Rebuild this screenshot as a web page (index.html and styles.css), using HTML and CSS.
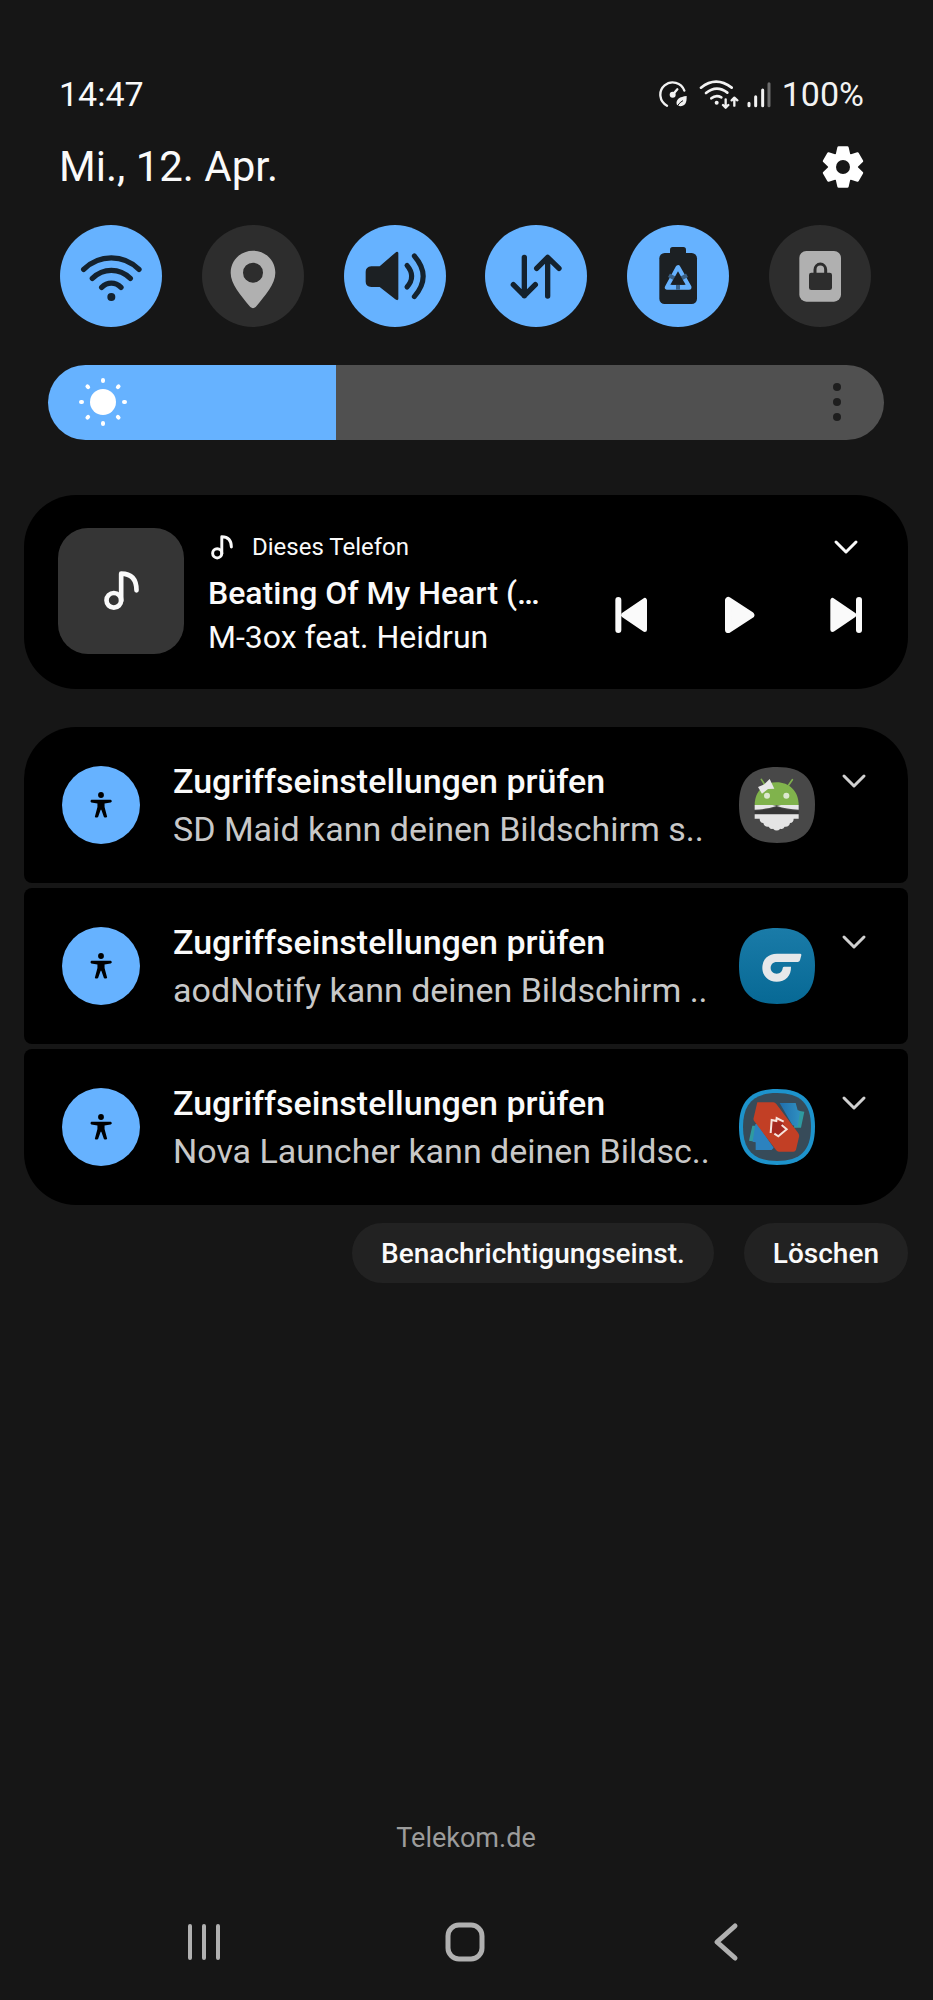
FILE: index.html
```
<!DOCTYPE html>
<html lang="de">
<head>
<meta charset="UTF-8">
<meta name="viewport" content="width=device-width, initial-scale=1.0">
<title>Benachrichtigungen</title>
<link rel="stylesheet" href="styles.css">
</head>
<body>

<!-- Shared icons -->
<svg class="sprite" aria-hidden="true">
    <symbol id="chevron" viewBox="0 0 40 40">
        <path d="M10 15 L20 25 L30 15" fill="none" stroke="currentColor" stroke-width="3" stroke-linecap="round" stroke-linejoin="round"/>
    </symbol>
    <symbol id="note" viewBox="0 0 104 120">
        <circle cx="29" cy="88" r="22" fill="none" stroke="currentColor" stroke-width="14"/>
        <path d="M51 90 V8 C80 8 97 24 97 58" fill="none" stroke="currentColor" stroke-width="14" stroke-linecap="round" stroke-linejoin="round"/>
    </symbol>
    <symbol id="person" viewBox="0 0 68 80">
        <circle cx="34" cy="9" r="9"/>
        <path d="M4 24 H64 Q68 26 67 30 L64 32 L45 35 V46 L53 76 Q48 81 43 77 L35 55 H33 L25 77 Q18 81 15 76 L23 46 V35 L4 32 Q-1 28 4 24Z"/>
    </symbol>
</svg>

<header class="status-bar">
    <time>14:47</time>
    <div class="status-icons">
        <svg class="gauge" viewBox="55 30 90 84">
            <path d="M82 107 A37 37 0 1 1 134 62" fill="none" stroke="#f2f2f2" stroke-width="7" stroke-linecap="round"/>
            <circle cx="99" cy="74" r="9" fill="#f2f2f2"/>
            <path d="M99 74 L113 58" stroke="#f2f2f2" stroke-width="7" stroke-linecap="round"/>
            <path d="M141 78 C120 80 108 88 111 103 C114 110 131 111 137 101 C141 94 141 88 141 78Z" fill="#f2f2f2"/>
            <path d="M112 113 C114 104 121 97 130 92" fill="none" stroke="#161616" stroke-width="3"/>
        </svg>
        <svg class="wifi" viewBox="175 24 120 90">
            <g fill="none" stroke="#f2f2f2" stroke-width="8" stroke-linecap="round" stroke-linejoin="round">
                <path d="M181 50 Q226 14 273 50"/>
                <path d="M196 66 Q228 40 260 65"/>
                <path d="M212 82 Q226 70 242 79"/>
                <path d="M255 85 V109 M247 102 L255 110 L263 102 M281 104 V81 M273 88 L281 80 L290 88" stroke-width="7"/>
            </g>
            <circle cx="228" cy="95" r="6" fill="#f2f2f2"/>
        </svg>
        <svg class="signal" viewBox="318 30 72 81">
            <g fill="none" stroke="#f2f2f2" stroke-width="9" stroke-linecap="round">
                <path d="M324 97 V104 M344 77 V104 M365 57 V104"/>
                <path d="M384 38 V104" stroke="#6c6c6c"/>
            </g>
        </svg>
        <span>100%</span>
    </div>
</header>

<div class="date-row">
    <h1>Mi., 12. Apr.</h1>
    <button class="settings" aria-label="Einstellungen">
        <svg viewBox="-66 -66 132 132">
            <g fill="#fff" stroke="#fff" stroke-width="8" stroke-linejoin="round">
                <circle r="40"/>
                <path id="teeth" d="M-13 -58 H13 L19 -32 H-19Z M-13 58 H13 L19 32 H-19Z"/>
                <use href="#teeth" transform="rotate(60)"/>
                <use href="#teeth" transform="rotate(120)"/>
            </g>
            <circle r="21" fill="#161616"/>
        </svg>
    </button>
</div>

<div class="tiles">
    <button class="tile on" aria-label="WLAN">
        <svg viewBox="0 0 306 306">
            <g fill="none" stroke="#14222e" stroke-width="16" stroke-linecap="round">
                <path d="M71 133 C118 87 190 87 237 133"/>
                <path d="M97 160 C130 128 178 128 211 160"/>
                <path d="M125 187 C142 170 166 170 183 187"/>
            </g>
            <circle cx="154" cy="216" r="12" fill="#14222e"/>
        </svg>
    </button>
    <button class="tile" aria-label="Standort">
        <svg viewBox="0 0 306 306">
            <path fill="#b0b0b0" fill-rule="evenodd" d="M153 77 C190 77 220 106 220 143 C220 178 190 210 161 246 Q153 253 145 246 C116 210 86 178 86 143 C86 106 116 77 153 77Z M153 113 A30 30 0 1 0 153 173 A30 30 0 1 0 153 113Z"/>
        </svg>
    </button>
    <button class="tile on" aria-label="Ton">
        <svg viewBox="0 0 306 306">
            <path fill="#1c2023" d="M82 124 H107 L154 83 Q160 78 163 83 V223 Q160 228 154 223 L107 186 H82 Q65 184 65 170 V140 Q65 126 82 124Z"/>
            <g fill="none" stroke="#14222e" stroke-width="15" stroke-linecap="round">
                <path d="M189 121 Q217 154 189 186"/>
                <path d="M211 93 Q264 154 211 215"/>
            </g>
        </svg>
    </button>
    <button class="tile on" aria-label="Mobile Daten">
        <svg viewBox="0 0 306 306">
            <path fill="none" stroke="#14222e" stroke-width="16" stroke-linecap="round" stroke-linejoin="round" d="M118 97 V212 M85 179 L118 212 L151 179 M188 213 V98 M155 130 L188 97 L222 130"/>
        </svg>
    </button>
    <button class="tile on" aria-label="Energiesparen">
        <svg viewBox="0 0 306 306">
            <rect x="129" y="66" width="48" height="40" rx="8" fill="#1c2023"/>
            <rect x="97" y="84" width="113" height="153" rx="16" fill="#1c2023"/>
            <path d="M153 128 L121 187 H186Z" fill="#1c2023" stroke="#66b2ff" stroke-width="15" stroke-linejoin="round"/>
            <path d="M126 151 L142 160 M180 151 L164 160 M153 180 V194" stroke="#3b6288" stroke-width="12"/>
            <path d="M153 139 L176 179 H130Z" fill="#1c2023"/>
        </svg>
    </button>
    <button class="tile" aria-label="Hochformat">
        <svg viewBox="0 0 306 306">
            <rect x="91" y="78" width="125" height="152" rx="21" fill="#b0b0b0"/>
            <rect x="120" y="143" width="69" height="52" rx="7" fill="#2d2d2d"/>
            <path d="M138 146 V134 A16 17 0 0 1 170 134 V146" fill="none" stroke="#2d2d2d" stroke-width="9"/>
        </svg>
    </button>
</div>

<div class="brightness">
    <input type="range" min="0" max="200" value="69" aria-label="Helligkeit" style="--level: 34.5%">
    <svg class="sun" viewBox="-24 -24 48 48">
        <circle r="13" fill="#fff"/>
        <g stroke="#fff" stroke-width="4" stroke-linecap="round">
            <path id="rays" d="M0 -22 V-21 M0 22 V21 M-22 0 H-21 M22 0 H21"/>
            <use href="#rays" transform="rotate(45)"/>
        </g>
    </svg>
    <button class="more" aria-label="Mehr">
        <svg viewBox="0 0 40 40">
            <g fill="#1e1e1e">
                <circle cx="20" cy="5" r="4"/>
                <circle cx="20" cy="20" r="4"/>
                <circle cx="20" cy="35" r="4"/>
            </g>
        </svg>
    </button>
</div>

<section class="media">
    <div class="cover"><svg><use href="#note"/></svg></div>
    <div class="media-body">
        <div class="media-top">
            <svg class="small-note"><use href="#note"/></svg>
            <span>Dieses Telefon</span>
            <button class="icon-button" aria-label="Erweitern"><svg><use href="#chevron"/></svg></button>
        </div>
        <div class="media-bottom">
            <div class="track">
                <h2>Beating Of My Heart (…</h2>
                <p>M-3ox feat. Heidrun</p>
            </div>
            <div class="controls">
                <button class="icon-button" aria-label="Zurück">
                    <svg viewBox="0 0 120 120">
                        <g fill="#fafafa" stroke="#fafafa" stroke-linejoin="round" stroke-linecap="round">
                            <path d="M98 16 V104 L34 60Z" stroke-width="14"/>
                            <path d="M19 15 V105" stroke-width="18"/>
                        </g>
                    </svg>
                </button>
                <button class="icon-button" aria-label="Wiedergabe">
                    <svg viewBox="0 0 120 120">
                        <path d="M28 16 V104 L96 60Z" fill="#fafafa" stroke="#fafafa" stroke-width="20" stroke-linejoin="round"/>
                    </svg>
                </button>
                <button class="icon-button" aria-label="Weiter">
                    <svg viewBox="0 0 120 120">
                        <g fill="#fafafa" stroke="#fafafa" stroke-linejoin="round" stroke-linecap="round">
                            <path d="M20 16 V104 L84 60Z" stroke-width="14"/>
                            <path d="M99 15 V105" stroke-width="18"/>
                        </g>
                    </svg>
                </button>
            </div>
        </div>
    </div>
</section>

<section class="notifications">
    <article class="notification">
        <div class="badge"><svg><use href="#person"/></svg></div>
        <div class="message">
            <h2>Zugriffseinstellungen prüfen</h2>
            <p>SD Maid kann deinen Bildschirm s..</p>
        </div>
        <svg class="app-icon" viewBox="0 0 228 228">
            <path fill="#484848" d="M114 0 C192 0 228 36 228 114 S192 228 114 228 S0 192 0 114 S36 0 114 0Z"/>
            <path d="M67 37 L78 54 M160 38 L149 54" stroke="#7fae4e" stroke-width="5" stroke-linecap="round"/>
            <path fill="#80b34c" d="M47 115 C47 72 76 46 113 46 S179 72 179 115Z"/>
            <path fill="#e8e8e8" d="M47 114 H100 L113 117 L126 114 H179 V128 C155 127 134 124 113 117 C92 124 71 127 47 128Z"/>
            <path fill="#363636" d="M47 131 C76 130 94 126 113 120 C132 126 150 130 179 131 V142 H47Z"/>
            <path fill="#e4e4e4" d="M47 142 H179 V155 H164 Q164 167 153 168 Q150 181 137 179 Q132 188 124 185 Q113 196 102 185 Q94 188 89 179 Q76 181 73 168 Q62 167 62 155 H47Z"/>
            <circle cx="84" cy="86" r="9" fill="#dce8cf"/>
            <circle cx="142" cy="86" r="9" fill="#dce8cf"/>
            <path fill="#e8e8e8" d="M57 60 L76 52 L92 36 L106 65 L87 66 L69 80Z"/>
        </svg>
        <button class="icon-button" aria-label="Erweitern"><svg><use href="#chevron"/></svg></button>
    </article>

    <article class="notification">
        <div class="badge"><svg><use href="#person"/></svg></div>
        <div class="message">
            <h2>Zugriffseinstellungen prüfen</h2>
            <p>aodNotify kann deinen Bildschirm ..</p>
        </div>
        <svg class="app-icon" viewBox="0 0 228 228">
            <linearGradient id="aod" x2="0" y2="1">
                <stop offset="0" stop-color="#1a7ba8"/>
                <stop offset="1" stop-color="#076995"/>
            </linearGradient>
            <path fill="url(#aod)" d="M114 0 C192 0 228 36 228 114 S192 228 114 228 S0 192 0 114 S36 0 114 0Z"/>
            <path fill="#e6e8ea" d="M184 77 Q188 77 187 82 L183 97 Q181 102 176 102 H114 C101 102 95 110 95 120 C95 130 103 137 113 137 C124 137 130 130 131 121 Q131 116 135 116 H156 C157 143 139 161 113 161 C88 161 70 144 70 120 C70 93 88 77 114 77Z"/>
        </svg>
        <button class="icon-button" aria-label="Erweitern"><svg><use href="#chevron"/></svg></button>
    </article>

    <article class="notification">
        <div class="badge"><svg><use href="#person"/></svg></div>
        <div class="message">
            <h2>Zugriffseinstellungen prüfen</h2>
            <p>Nova Launcher kann deinen Bildsc..</p>
        </div>
        <svg class="app-icon" viewBox="0 0 228 228">
            <linearGradient id="nova-right">
                <stop offset="0" stop-color="#1f6fae"/>
                <stop offset="1" stop-color="#2f8fc0"/>
            </linearGradient>
            <path fill="#1d93cc" d="M114 0 C192 0 228 36 228 114 S192 228 114 228 S0 192 0 114 S36 0 114 0Z"/>
            <path fill="#374b59" d="M114 12 C184 12 216 44 216 114 S184 216 114 216 S12 184 12 114 S44 12 114 12Z"/>
            <path fill="#2e9aa0" d="M170 64 L196 68 L186 116 H165Z M40 110 L58 110 V160 L30 155Z"/>
            <path fill="url(#nova-right)" d="M122 42 H170 L176 64 L183 66 L176 114 L160 108Z"/>
            <path fill="#2c82bf" d="M54 104 L104 176 L98 183 H50 V160 L41 158 L49 106Z"/>
            <path fill="#c23f25" d="M55 40 H103 Q108 40 112 45 L177 131 Q182 138 180 144 L171 182 Q169 188 163 188 H120 Q115 188 111 183 L46 97 Q42 92 44 86Z"/>
            <path fill="#a5281f" d="M98 96 L130 98 L142 120 L118 142 L97 130Z"/>
            <path fill="none" stroke="#f6e3dc" stroke-width="6" d="M95 132 L98 93 L112 96 L113 87 L134 98 M128 108 L143 121 L118 142 L106 134"/>
        </svg>
        <button class="icon-button" aria-label="Erweitern"><svg><use href="#chevron"/></svg></button>
    </article>
</section>

<div class="actions">
    <button>Benachrichtigungseinst.</button>
    <button>Löschen</button>
</div>

<footer>
    <p class="carrier">Telekom.de</p>
    <nav class="nav-bar">
        <button aria-label="Letzte Apps">
            <svg viewBox="0 0 40 40"><path d="M6 4 V36 M20 4 V36 M34 4 V36" fill="none" stroke="#b0b0b0" stroke-width="4" stroke-linecap="round"/></svg>
        </button>
        <button aria-label="Startseite">
            <svg viewBox="0 0 40 40"><rect x="3" y="3" width="34" height="34" rx="11" fill="none" stroke="#b0b0b0" stroke-width="5"/></svg>
        </button>
        <button aria-label="Zurück">
            <svg viewBox="0 0 40 40"><path d="M29 4 L11 20 L29 36" fill="none" stroke="#b0b0b0" stroke-width="5" stroke-linecap="round" stroke-linejoin="round"/></svg>
        </button>
    </nav>
</footer>

</body>
</html>
```
FILE: styles.css
```
* {
    box-sizing: border-box;
}
body {
    margin: 0;
    min-height: 100vh;
    padding: 74px 25px 0 24px;
    display: flex;
    flex-direction: column;
    background-color: #161616;
    color: #fafafa;
    font-family: Roboto, "Liberation Sans", sans-serif;
}
h1, h2, p {
    margin: 0;
    white-space: nowrap;
}
svg {
    display: block;
}
button {
    border: 0;
    padding: 0;
    background: none;
    color: inherit;
    font-family: inherit;
}
.sprite {
    position: absolute;
    width: 0;
    height: 0;
}

/* Status bar and date */
.status-bar {
    display: flex;
    justify-content: space-between;
    padding: 0 44px 0 35px;
    font-size: 34px;
    line-height: 40px;
}
.status-icons {
    display: flex;
    align-items: center;
    color: #f2f2f2;
}
.gauge {
    width: 30px;
    height: 28px;
    margin-right: 11px;
}
.wifi {
    width: 40px;
    height: 30px;
    margin-right: 8px;
}
.signal {
    width: 24px;
    height: 27px;
    margin-right: 11px;
}
.date-row {
    display: flex;
    justify-content: space-between;
    align-items: center;
    margin-top: 28px;
    padding: 0 43px 0 35px;
}
h1 {
    font-size: 42px;
    font-weight: 400;
    line-height: 50px;
}
.settings svg {
    width: 44px;
    height: 44px;
}

/* Quick settings */
.tiles {
    display: flex;
    justify-content: space-between;
    margin-top: 33px;
    padding: 0 37px 0 36px;
}
.tile {
    width: 102px;
    height: 102px;
    border-radius: 50%;
    background-color: #2d2d2d;
}
.tile.on {
    background-color: #66b2ff;
}
.brightness {
    position: relative;
    margin: 38px 24px 0;
    height: 75px;
}
.brightness input {
    appearance: none;
    display: block;
    width: 100%;
    height: 100%;
    margin: 0;
    border-radius: 38px;
    background: linear-gradient(to right, #66b2ff var(--level), #505050 var(--level));
}
.brightness input::-webkit-slider-thumb {
    appearance: none;
    width: 1px;
    height: 75px;
}
.sun {
    position: absolute;
    left: 31px;
    top: 13px;
    width: 48px;
    height: 48px;
    pointer-events: none;
}
.more {
    position: absolute;
    right: 27px;
    top: 17px;
}
.more svg {
    width: 40px;
    height: 40px;
}

/* Media player */
.media {
    display: flex;
    align-items: flex-start;
    gap: 24px;
    margin-top: 55px;
    padding: 33px 42px 30px 34px;
    border-radius: 52px;
    background-color: #000;
}
.cover {
    width: 126px;
    height: 126px;
    display: flex;
    flex-shrink: 0;
    align-items: center;
    justify-content: center;
    border-radius: 30px;
    background-color: #353535;
}
.cover svg {
    width: 35px;
    height: 40px;
}
.media-body {
    flex: 1;
    min-width: 0;
    padding-top: 3px;
}
.media-top {
    display: flex;
    align-items: center;
    height: 32px;
    font-size: 24px;
}
.small-note {
    width: 22px;
    height: 25px;
    margin: 0 19px 0 3px;
}
.media-top .icon-button {
    margin-left: auto;
}
.media-bottom {
    display: flex;
    justify-content: space-between;
    align-items: center;
    margin-top: 8px;
}
.track {
    font-size: 32px;
    line-height: 44px;
}
h2 {
    font-size: inherit;
    font-weight: 500;
}
.controls {
    display: flex;
    gap: 67px;
}
.icon-button svg {
    width: 40px;
    height: 40px;
}

/* Notifications */
.notifications {
    display: flex;
    flex-direction: column;
    gap: 5px;
    margin-top: 38px;
}
.notification {
    display: flex;
    align-items: center;
    height: 156px;
    padding: 0 34px 0 38px;
    border-radius: 8px;
    background-color: #000;
}
.notification:first-child {
    border-top-left-radius: 52px;
    border-top-right-radius: 52px;
}
.notification:last-child {
    border-bottom-left-radius: 52px;
    border-bottom-right-radius: 52px;
}
.badge {
    width: 78px;
    height: 78px;
    display: flex;
    flex-shrink: 0;
    align-items: center;
    justify-content: center;
    margin-right: 33px;
    border-radius: 50%;
    background-color: #66b2ff;
    color: #000;
}
.badge svg {
    width: 22px;
    height: 26px;
}
.message {
    flex: 1;
    min-width: 0;
    font-size: 34px;
    line-height: 48px;
}
.message p {
    color: #c8c8c8;
}
.app-icon {
    width: 76px;
    height: 76px;
    flex-shrink: 0;
    margin-right: 19px;
}
.notification .icon-button {
    align-self: flex-start;
    margin-top: 34px;
    color: #d0d0d0;
}
.actions {
    display: flex;
    justify-content: flex-end;
    gap: 30px;
    margin-top: 18px;
}
.actions button {
    height: 60px;
    padding: 0 29px;
    border-radius: 30px;
    background-color: #222;
    font-size: 28px;
    font-weight: 500;
}

/* Carrier and navigation */
footer {
    margin-top: auto;
}
.carrier {
    color: #9c9c9c;
    font-size: 27px;
    line-height: 32px;
    text-align: center;
}
.nav-bar {
    display: grid;
    grid-template-columns: repeat(3, 1fr);
    justify-items: center;
    align-items: center;
    height: 116px;
    margin-top: 30px;
    padding: 0 52px 0 49px;
}
.nav-bar svg {
    width: 40px;
    height: 40px;
}
```
